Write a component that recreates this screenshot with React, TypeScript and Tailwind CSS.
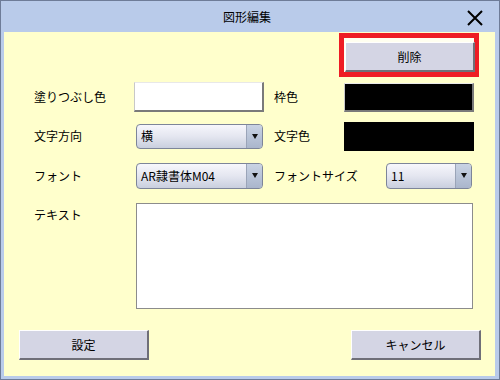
const jp = "font-['Noto_Sans_CJK_JP','Noto_Sans',sans-serif]";

function WinButton({ label, className = '' }: { label: string; className?: string }) {
  return (
    <div
      className={`flex h-[30px] w-[130px] items-center justify-center border-t border-l border-t-white border-l-white border-r-2 border-b-2 border-r-[#6f6f78] border-b-[#6f6f78] bg-[#d4d5e4] text-[12px] text-black ${className}`}
    >
      {label}
    </div>
  );
}

function Select({ value, className = '' }: { value: string; className?: string }) {
  return (
    <div
      className={`flex items-stretch overflow-hidden rounded-[4px] border border-[#7d8599] bg-gradient-to-b from-[#f7f7fc] via-[#e4e6f0] to-[#c9cfde] ${className}`}
    >
      <div className="flex flex-1 items-center pl-[4px] text-[12px] text-black">{value}</div>
      <div className="flex w-[16px] items-center justify-center border-l border-[#9aa4b8] bg-gradient-to-b from-[#c9d3e4] to-[#aab6cc]">
        <span className="block h-0 w-0 border-x-[3px] border-t-[5px] border-x-transparent border-t-[#111]" />
      </div>
    </div>
  );
}

function ColorBox({ color, className = '' }: { color: string; className?: string }) {
  return (
    <div
      className={`border-l border-t border-l-[#c8c8c8] border-t-[#e8e8e8] border-r-2 border-b-2 border-r-[#7a7a7a] border-b-[#7a7a7a] ${color} ${className}`}
    />
  );
}

export default function App() {
  return (
    <div className={`flex h-[380px] w-[500px] flex-col border border-[#6e7c98] bg-[#b9cbea] ${jp}`}>
      {/* title bar */}
      <div className="relative flex h-[31px] items-center justify-center">
        <span className="ml-[-6px] text-[12px] text-black">図形編集</span>
        <svg className="absolute right-[16px] top-[9px]" width="16" height="16" viewBox="0 0 16 16">
          <path d="M1 1 L15 15 M15 1 L1 15" stroke="#000" strokeWidth="2" fill="none" />
        </svg>
      </div>

      {/* body */}
      <div className="mx-[3px] mb-[3px] mr-[4px] flex flex-1 flex-col bg-[#ffffcc] text-[12px] text-black">
        <div className="mt-[1px] flex justify-end pr-[16px]">
          <div className="h-[44px] w-[140px] border-[5px] border-[#ee1c24] bg-[#fffff0] pl-[1px] pt-[4px]">
            <WinButton label="削除" />
          </div>
        </div>

        {/* row 1 */}
        <div className="mt-[5px] flex h-[30px] items-center pl-[30px]">
          <span className="w-[100px]">塗りつぶし色</span>
          <ColorBox color="bg-white" className="h-[30px] w-[130px]" />
          <span className="ml-[10px] w-[70px]">枠色</span>
          <ColorBox color="bg-black" className="h-[29px] w-[130px]" />
        </div>

        {/* row 2 */}
        <div className="mt-[10px] flex h-[28px] items-center pl-[30px]">
          <span className="w-[100px]">文字方向</span>
          <Select value="横" className="ml-[2px] h-[25px] w-[127px]" />
          <span className="ml-[11px] w-[70px]">文字色</span>
          <div className="h-[29px] w-[130px] bg-black" />
        </div>

        {/* row 3 */}
        <div className="mt-[12px] flex h-[27px] items-center pl-[30px]">
          <span className="w-[100px]">フォント</span>
          <Select value="AR隷書体M04" className="ml-[2px] h-[26px] w-[127px]" />
          <span className="ml-[11px] w-[112px]">フォントサイズ</span>
          <Select value="11" className="h-[26px] w-[86px]" />
        </div>

        {/* text */}
        <div className="mt-[14px] flex pl-[30px]">
          <span className="w-[102px] pt-[3px]">テキスト</span>
          <div className="h-[106px] w-[337px] border border-[#8c8c8c] bg-white" />
        </div>

        {/* bottom buttons */}
        <div className="mt-[21px] flex justify-between pl-[15px] pr-[14px]">
          <WinButton label="設定" />
          <WinButton label="キャンセル" />
        </div>
      </div>
    </div>
  );
}
